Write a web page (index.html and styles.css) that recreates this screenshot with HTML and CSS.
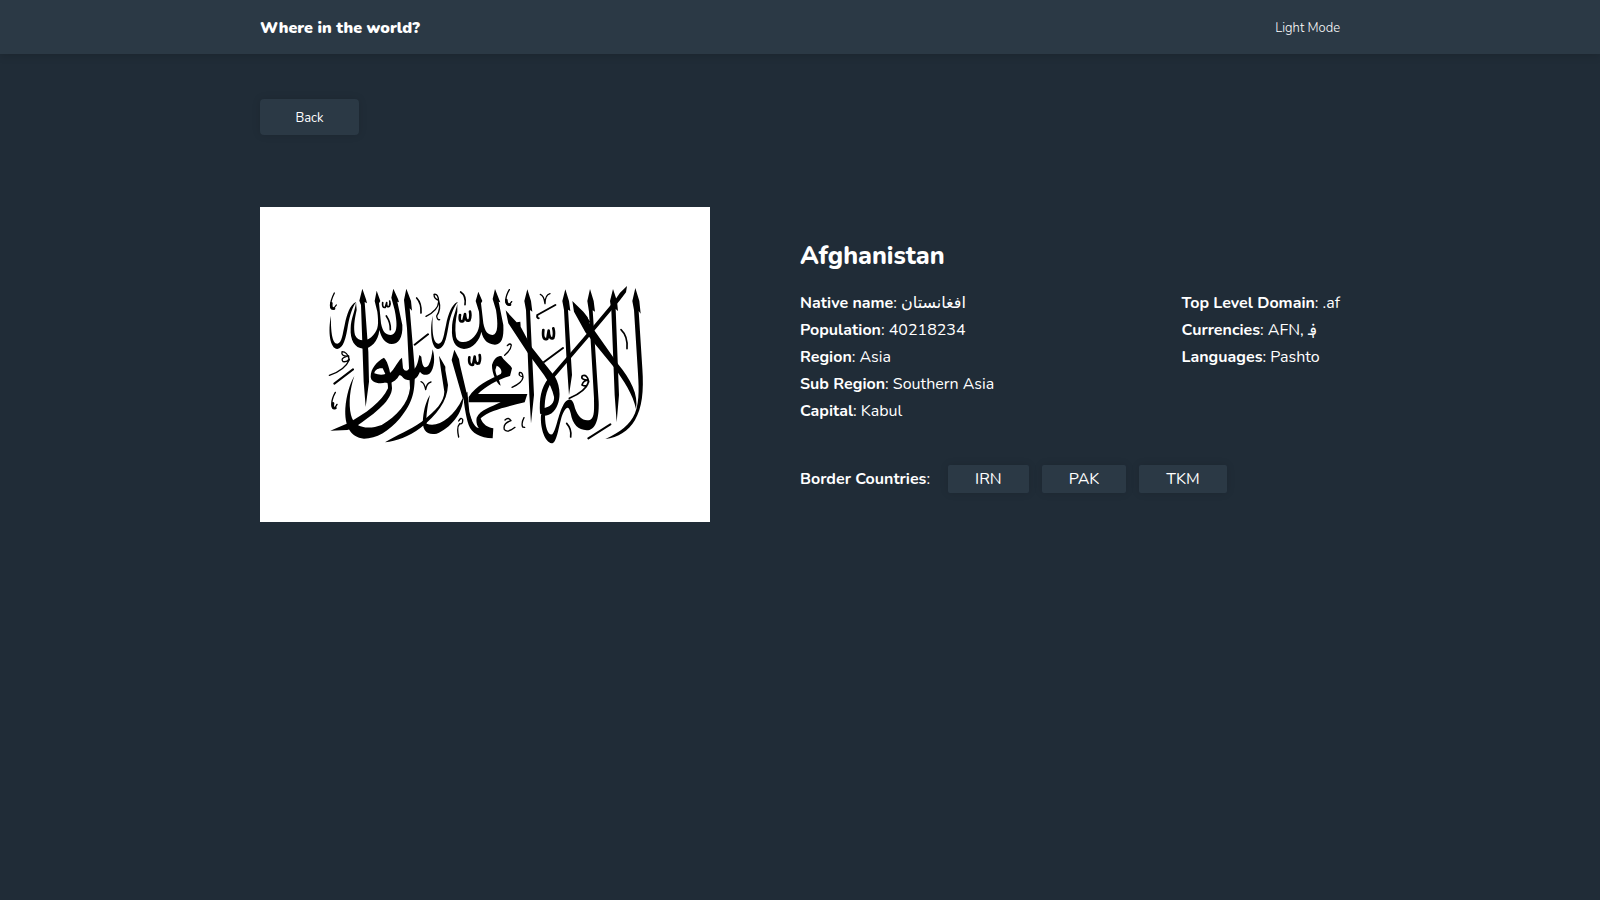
FILE: index.html
```html
<!DOCTYPE html>
<html lang="en">
<head>
<meta charset="utf-8">
<meta name="viewport" content="width=device-width, initial-scale=1">
<title>Where in the world?</title>
<link rel="stylesheet" href="styles.css">
</head>
<body>
<header class="topbar">
  <div class="container topbar-inner">
    <h1 class="brand">Where in the world?</h1>
    <button class="mode" type="button">Light Mode</button>
  </div>
</header>
<main class="container">
  <button class="back" type="button">Back</button>
  <article class="country">
    <svg class="flag" viewBox="30 36 1350 945" role="img" aria-label="Flag of Afghanistan">
      <rect x="30" y="36" width="1350" height="945" fill="#fff"/>
      <g fill="#000">
        <path d="M1156 279L1168 318L1172 356L1166 348L1177 520C1182 590 1176 640 1155 675C1135 708 1105 728 1066 732C1110 712 1140 690 1155 655C1170 615 1166 570 1163 520L1152 345L1147 318Z"/>
        <path d="M1089 282L1101 318L1104 348L1097 342L1107 600L1100 682L1094 600L1084 345L1080 318Z"/>
        <path d="M1020 282L1031 318L1035 350L1028 346L1046 620C1048 675 1035 706 1010 706C985 704 968 690 962 655C955 625 945 640 935 665C925 700 920 745 905 745C885 742 870 700 873 660L885 660C885 700 895 722 907 718C920 705 925 650 945 622C960 605 970 615 975 640C985 668 1000 680 1020 675C1035 668 1032 640 1032 610L1017 350L1012 318Z"/>
        <path d="M1131 273L1128 292L1108 318L1010 434L914 546C890 580 884 605 884 645L870 655C868 610 872 580 896 549L1000 428L1095 315L1110 293Z"/>
        <path d="M767 346L800 382L811 380L812 395L845 457L915 545C935 580 934 630 905 655C890 665 875 664 870 655L873 640C890 640 915 630 912 605C908 585 897 562 882 540L836 478L775 385Z"/>
        <path d="M832 283L843 318L847 350L840 345L852 600L843 685L838 600L828 345L823 318Z"/>
        <path d="M946 283L957 318L961 348L954 344L966 540L957 600L950 500L942 345L937 318Z"/>
        <path d="M967 318L1000 350L1013 367L1020 388L1104 507C1142 552 1166 600 1158 642C1150 600 1120 555 1092 517L1006 412L972 350Z"/>
        <path d="M735 282L748 315L751 322L746 320L760 390C762 430 755 448 735 449C712 447 700 435 694 410C690 435 668 461 642 462C614 460 604 435 606 400C606 370 618 350 623 322C612 335 602 360 596 390C590 425 585 460 564 462C545 460 538 410 548 362C546 405 548 445 566 446C580 444 582 415 588 390C595 355 605 330 622 321L622 350C617 375 614 400 618 425C624 448 655 445 672 425C690 405 690 385 687 350L677 318L685 290L697 318L693 325L700 385C705 412 715 420 728 420C745 417 744 385 738 345L728 312Z"/>
        <path d="M430 281L444 312L447 322L442 320L457 390C459 430 445 447 425 447C405 446 395 430 388 405C385 440 362 461 340 461C314 460 300 435 302 400C303 370 315 350 318 322C308 335 300 360 294 390C288 430 280 460 262 462C240 460 233 410 243 362C242 405 246 446 262 446C276 444 278 415 284 390C291 355 300 330 318 321L320 345C313 375 310 400 315 420C323 442 355 440 370 420C386 402 386 385 382 350L374 318L380 287L391 318L387 325L393 385C398 412 408 420 422 420C444 417 442 385 434 345L424 308Z"/>
        <path d="M337 281L348 313L351 325L344 321L355 470L357 560L347 636L341 560L333 330L328 317Z"/>
        <path d="M469 281L483 318L486 347L479 340L494 520C496 590 490 620 450 670C415 710 380 731 342 731C300 728 283 690 286 640C289 600 300 565 313 543C300 580 295 625 303 660C312 700 355 705 395 690C440 665 475 625 480 580L471 400L462 315Z"/>
        <path fill-rule="evenodd" d="M402 488C415 500 424 540 426 580C424 615 385 650 310 700L292 705L241 707L290 686C350 655 395 620 414 580C414 565 412 560 408 562C385 570 362 560 362 545C362 520 380 500 402 488ZM398 520C385 518 374 525 373 535C385 540 398 540 406 537Z"/>
        <path d="M408 540C430 535 440 500 456 488L459 520C465 530 472 530 478 520L490 523C500 520 504 500 508 480L514 485C517 520 526 522 536 510C544 495 545 480 548 463C556 490 553 520 540 535C530 543 515 540 510 530C500 555 485 560 465 553C455 545 450 535 445 545C435 560 420 568 404 562Z"/>
        <path d="M567 482L586 515L586 525L594 570C592 620 560 660 512 698C475 725 440 738 405 742C440 720 480 705 515 680C560 645 582 620 583 590L573 525Z"/>
        <path d="M613 464L627 492L630 510L649 590C652 630 655 660 668 682C655 650 638 610 640 605C640 655 600 700 560 716C530 722 515 705 519 670C522 640 530 615 540 600C530 640 528 675 530 686C560 700 610 670 638 610L605 495Z"/>
        <path d="M640 600L652 590L658 650C665 680 675 700 690 700L730 700L728 730C690 728 665 715 656 690C648 665 642 630 640 600Z"/>
        <path d="M656 622V606C680 570 715 555 752 537C758 530 752 515 740 512L736 525C738 545 748 550 752 572C738 565 725 530 726 510C732 490 742 483 754 483C764 500 780 508 786 520L780 543C740 555 705 575 684 597H832L824 622C775 635 720 645 692 670C696 682 705 695 728 700L725 718L700 712C688 705 676 690 680 668C690 645 725 635 752 622Z"/>
      </g>
      <g fill="none" stroke="#000" stroke-width="4" stroke-linecap="round" stroke-linejoin="round">
        <path d="M253 294Q240 320 242 336Q246 350 259 330M256 592Q243 615 246 632Q250 650 261 628M778 284Q765 306 768 323Q775 337 785 320M822 668Q813 685 818 696L824 697"/>
        <path stroke-width="8" d="M244 325Q242 342 252 341M249 625Q246 642 256 639M769 315Q770 331 780 329"/>
        <path d="M238 541Q285 525 298 494Q292 470 276 470Q272 485 296 483Q300 502 279 500Q270 490 290 484"/>
        <path stroke-width="6" d="M253 566L309 523M494 449L534 418M882 501L939 459M1015 730L1081 688M862 360L916 330M862 360Q860 370 866 370"/>
        <path stroke-width="5" d="M398 323Q396 340 406 337L410 323Q409 339 418 334Q422 325 419 318M409 363Q422 382 421 404M500 309Q515 325 513 354M632 291Q649 302 645 329"/>
        <path d="M528 364Q565 345 566 320Q565 295 552 298Q552 312 566 316Q574 342 560 363Q562 376 569 374"/>
        <path stroke-width="8" d="M630 360Q626 384 640 378L645 357Q646 382 658 376Q663 365 660 350M658 487Q655 513 669 509L674 485Q675 510 687 505Q692 495 689 480M880 405Q876 438 892 431L896 407Q897 436 910 429Q914 415 910 400"/>
        <path d="M513 560Q523 563 527 584Q530 564 543 561M871 298Q882 302 885 326Q885 300 900 296M764 481Q783 465 784 450Q780 443 772 452"/>
        <path d="M786 577Q817 563 819 547Q818 531 809 532Q804 543 817 545M626 726Q619 696 629 686Q639 689 638 674Q633 665 626 678M765 675Q775 665 783 677Q758 685 763 704Q773 715 795 697"/>
        <path stroke-width="5" d="M958 610Q1008 588 1016 560Q1012 537 997 542Q990 555 1015 555Q1015 580 996 570Q1000 556 1015 555M1113 404Q1134 424 1131 461M950 685Q966 703 962 726M991 365Q1010 370 1018 380"/>
      </g>
    </svg>
    <section class="info">
      <h2 class="name">Afghanistan</h2>
      <div class="facts">
        <dl class="list">
          <div><dt>Native name</dt><dd>: <bdi lang="ps">افغانستان</bdi></dd></div>
          <div><dt>Population</dt><dd>: 40218234</dd></div>
          <div><dt>Region</dt><dd>: Asia</dd></div>
          <div><dt>Sub Region</dt><dd>: Southern Asia</dd></div>
          <div><dt>Capital</dt><dd>: Kabul</dd></div>
        </dl>
        <dl class="list">
          <div><dt>Top Level Domain</dt><dd>: .af</dd></div>
          <div><dt>Currencies</dt><dd>: AFN, <bdi>؋</bdi></dd></div>
          <div><dt>Languages</dt><dd>: Pashto</dd></div>
        </dl>
      </div>
      <div class="borders">
        <span class="borders-label"><b>Border Countries</b>:</span>
        <button class="chip" type="button">IRN</button>
        <button class="chip" type="button">PAK</button>
        <button class="chip" type="button">TKM</button>
      </div>
    </section>
  </article>
</main>
</body>
</html>
```
FILE: styles.css
```css
* { box-sizing: border-box; margin: 0; padding: 0; }
body {
  min-height: 100vh;
  background: #202c37;
  color: #fff;
  font: 400 16px/28px Nunito, Lato, "DejaVu Sans", sans-serif;
}
button {
  border: 0;
  background: #2b3945;
  color: inherit;
  font: inherit;
  cursor: pointer;
}
.container { width: 90%; max-width: 1080px; margin: 0 auto; }
.topbar { background: #2b3945; box-shadow: 0 2px 8px rgba(0, 0, 0, .15); }
.topbar-inner {
  display: flex;
  align-items: center;
  justify-content: space-between;
  min-height: 54px;
  padding-top: 2px;
}
.brand { font-size: 16px; font-weight: 900; }
.mode { font-size: 13px; font-weight: 300; background: none; }
.back {
  display: block;
  min-width: 99px;
  height: 36px;
  margin: 45px 0 72px;
  padding: 2px 24px 0;
  border-radius: 4px;
  box-shadow: 0 0 8px rgba(0, 0, 0, .12);
  font-size: 13px;
}
.country {
  display: grid;
  grid-template-columns: 5fr 6fr;
  gap: 90px;
  align-items: center;
}
.flag { display: block; width: 100%; height: auto; }
.name { margin-bottom: 14px; font-size: 25px; line-height: 40px; font-weight: 800; }
.facts { display: flex; justify-content: space-between; gap: 36px; line-height: 27px; }
.list > div { display: flex; white-space: pre; }
.list dt, .borders b { font-weight: 700; }
.list { display: grid; align-content: start; }
.borders { display: flex; flex-wrap: wrap; align-items: center; gap: 13px; margin-top: 40px; }
.borders-label { margin-right: 5px; }
.chip {
  height: 28px;
  padding: 0 27px;
  border-radius: 2px;
  box-shadow: 0 0 8px rgba(0, 0, 0, .12);
}
@media (max-width: 800px) {
  .country { grid-template-columns: 1fr; gap: 36px; }
  .facts { flex-wrap: wrap; }
}
```
